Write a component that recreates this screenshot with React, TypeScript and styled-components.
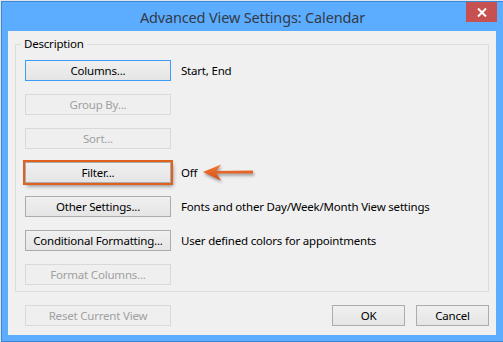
import React from "react";
import styled, { createGlobalStyle } from "styled-components";

const GlobalStyle = createGlobalStyle`
  html, body {
    margin: 0;
    padding: 0;
    background: #dfe4ea;
  }
  body {
    font-family: "Segoe UI", "Noto Sans", sans-serif;
    font-size: 11.5px;
    letter-spacing: -0.2px;
    color: #000000;
  }
  * {
    box-sizing: border-box;
  }
`;

interface SettingRow {
  label: string;
  value?: string;
  disabled?: boolean;
  focused?: boolean;
  highlighted?: boolean;
}

const rows: SettingRow[] = [
  { label: "Columns...", value: "Start, End", focused: true },
  { label: "Group By...", disabled: true },
  { label: "Sort...", disabled: true },
  { label: "Filter...", value: "Off", highlighted: true },
  { label: "Other Settings...", value: "Fonts and other Day/Week/Month View settings" },
  { label: "Conditional Formatting...", value: "User defined colors for appointments" },
  { label: "Format Columns...", disabled: true },
];

const CloseIcon = () => (
  <svg width="10" height="9" viewBox="0 0 10 9">
    <path d="M1 0.5 L9 8.5 M9 0.5 L1 8.5" stroke="#ffffff" strokeWidth="2" />
  </svg>
);

const CalloutArrow = () => (
  <ArrowSvg width="53" height="20" viewBox="0 0 53 20">
    <defs>
      <linearGradient id="arrowFill" x1="0" y1="0" x2="0" y2="1">
        <stop offset="0" stopColor="#f07a3a" />
        <stop offset="1" stopColor="#d94e12" />
      </linearGradient>
    </defs>
    <path
      d="M1 9 L19 1.5 L14.5 8 L51 7.6 L51 10.6 L14.5 10.4 L19 17.5 Z"
      fill="url(#arrowFill)"
    />
  </ArrowSvg>
);

const App: React.FC = () => {
  return (
    <>
      <GlobalStyle />
      <Window>
        <TitleBar>
          <span />
          <Title>Advanced View Settings: Calendar</Title>
          <CloseButton>
            <CloseIcon />
          </CloseButton>
        </TitleBar>
        <Client>
          <GroupBox>
            <Legend>Description</Legend>
            <RowList>
              {rows.map((row) => (
                <Row key={row.label}>
                  <DialogButton
                    $width={146}
                    $focused={row.focused}
                    $highlighted={row.highlighted}
                    disabled={row.disabled}
                  >
                    {row.label}
                  </DialogButton>
                  {row.value && <RowValue>{row.value}</RowValue>}
                  {row.highlighted && <CalloutArrow />}
                </Row>
              ))}
            </RowList>
          </GroupBox>
          <Footer>
            <DialogButton $width={146} disabled>
              Reset Current View
            </DialogButton>
            <FooterActions>
              <DialogButton $width={73}>OK</DialogButton>
              <DialogButton $width={73}>Cancel</DialogButton>
            </FooterActions>
          </Footer>
        </Client>
      </Window>
    </>
  );
};

export default App;

const Window = styled.div`
  margin: 1px 0 0 1px;
  width: 502px;
  height: 341px;
  display: flex;
  flex-direction: column;
  background: #5cadff;
  border: 1px solid #3b87d4;
  border-right: 0;
  padding: 0 7px 6px 6px;
`;

const TitleBar = styled.div`
  height: 29px;
  display: grid;
  grid-template-columns: 1fr auto 1fr;
  align-items: start;
  margin: 0 -7px 0 -6px;
`;

const Title = styled.div`
  align-self: center;
  font-size: 14.5px;
  letter-spacing: -0.15px;
  color: #333a44;
`;

const CloseButton = styled.div`
  justify-self: end;
  width: 31px;
  height: 20px;
  margin-right: 6px;
  background: #c75050;
  display: flex;
  align-items: center;
  justify-content: center;
`;

const Client = styled.div`
  flex: 1;
  background: #f0f0f0;
  padding: 5px 7px 8px 7px;
  display: flex;
  flex-direction: column;
`;

const GroupBox = styled.fieldset`
  margin: 0;
  min-width: 0;
  border: 1px solid #dcdcdc;
  padding: 8px 0 6px 5px;
`;

const Legend = styled.legend`
  padding: 0 3px;
  line-height: 16px;
`;

const RowList = styled.div`
  display: flex;
  flex-direction: column;
  gap: 13px;
  padding-left: 4px;
`;

const Row = styled.div`
  display: flex;
  align-items: center;
  gap: 10px;
`;

const RowValue = styled.span`
  white-space: nowrap;
`;

const ArrowSvg = styled.svg`
  margin-left: -5px;
  filter: drop-shadow(1px 2px 1.5px rgba(0, 0, 0, 0.4));
`;

const DialogButton = styled.button<{
  $width: number;
  $focused?: boolean;
  $highlighted?: boolean;
}>`
  width: ${({ $width }) => $width}px;
  height: 21px;
  padding: 0;
  font-family: inherit;
  font-size: 11.5px;
  letter-spacing: -0.2px;
  color: #000000;
  border: 1px solid ${({ $focused }) => ($focused ? "#3c9cf6" : "#acacac")};
  background: linear-gradient(#f0f0f0, #e5e5e5);
  flex-shrink: 0;
  outline: ${({ $highlighted }) => ($highlighted ? "2px solid #e0601e" : "none")};
  box-shadow: ${({ $highlighted }) =>
    $highlighted ? "2px 3px 4px rgba(0, 0, 0, 0.45)" : "none"};

  &:disabled {
    color: #a0a0a0;
    border-color: #d9d9d9;
    background: #efefef;
  }
`;

const Footer = styled.div`
  margin-top: 13px;
  display: flex;
  justify-content: space-between;
  padding-left: 10px;
`;

const FooterActions = styled.div`
  display: flex;
  gap: 11px;
`;
